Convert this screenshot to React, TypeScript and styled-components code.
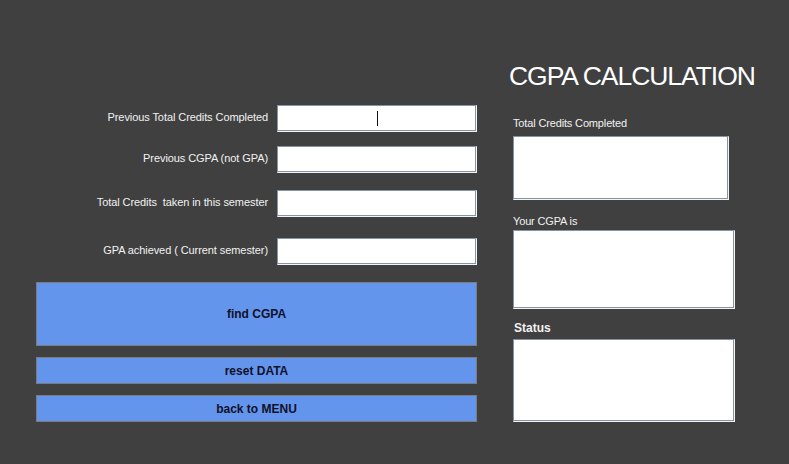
import React from "react";
import styled, { createGlobalStyle } from "styled-components";

const Global = createGlobalStyle`
  html, body { margin: 0; padding: 0; background: #404040; }
  body { font-family: "Liberation Sans", Arial, sans-serif; }
`;

const Page = styled.div`
  width: 789px;
  height: 464px;
  background: #404040;
  display: flex;
  align-items: flex-start;
  overflow: hidden;
`;

const LeftColumn = styled.div`
  margin-left: 36px;
  padding-top: 105px;
  width: 441px;
  display: flex;
  flex-direction: column;
`;

const FormRow = styled.div<{ $gap: number }>`
  display: grid;
  grid-template-columns: 241px 200px;
  align-items: center;
  margin-top: ${(p) => p.$gap}px;
`;

const FieldLabel = styled.label`
  text-align: right;
  padding-right: 9px;
  color: #f2f2f2;
  font-size: 11px;
  letter-spacing: -0.08px;
  line-height: 13px;
  padding-bottom: 2px;
`;

const bevel = `
  box-sizing: border-box;
  background: #ffffff;
  border: 1px solid;
  border-color: #8593a2 #f4f4f4 #f4f4f4 #8593a2;
  box-shadow: inset -1px -1px 0 #8593a2;
`;

const Field = styled.div`
  ${bevel}
  height: 27px;
  display: flex;
  align-items: center;
  justify-content: center;
`;

const Caret = styled.span`
  width: 1px;
  height: 15px;
  background: #111;
  margin-left: 1px;
`;

const ActionButton = styled.button<{ $gap: number; $height: number }>`
  box-sizing: border-box;
  margin-top: ${(p) => p.$gap}px;
  height: ${(p) => p.$height}px;
  width: 441px;
  background: #6495ed;
  border: 1px solid #7c7c7c;
  color: #10102a;
  font-family: "Liberation Sans", Arial, sans-serif;
  font-weight: bold;
  font-size: 12px;
  padding: 0;
  cursor: pointer;
`;

const RightColumn = styled.div`
  margin-left: 32px;
  padding-top: 63px;
  display: flex;
  flex-direction: column;
`;

const Title = styled.h1`
  margin: 0 0 27px 0;
  font-family: "Liberation Sans", Arial, sans-serif;
  font-weight: normal;
  font-size: 26.5px;
  letter-spacing: -1.05px;
  line-height: 27px;
  color: #ffffff;
  white-space: nowrap;
`;

const SectionLabel = styled.div<{ $bold?: boolean; $gapBelow: number }>`
  margin-left: ${(p) => (p.$bold ? 5 : 4)}px;
  margin-bottom: ${(p) => p.$gapBelow}px;
  color: #f2f2f2;
  font-size: ${(p) => (p.$bold ? 12 : 11)}px;
  font-weight: ${(p) => (p.$bold ? "bold" : "normal")};
  letter-spacing: ${(p) => (p.$bold ? 0 : -0.15)}px;
  line-height: ${(p) => (p.$bold ? 14 : 13)}px;
`;

const OutputBox = styled.div<{ $w: number; $h: number; $gapBelow: number }>`
  ${bevel}
  margin-left: 4px;
  width: ${(p) => p.$w}px;
  height: ${(p) => p.$h}px;
  margin-bottom: ${(p) => p.$gapBelow}px;
`;

const rows = [
  { label: "Previous Total Credits Completed", gap: 0, caret: true },
  { label: "Previous CGPA (not GPA)", gap: 14 },
  { label: "Total Credits\u00a0 taken in this semester", gap: 17 },
  { label: "GPA achieved ( Current semester)", gap: 21 },
];

export default function App() {
  return (
    <>
      <Global />
      <Page>
        <LeftColumn>
          {rows.map((r) => (
            <FormRow key={r.label} $gap={r.gap}>
              <FieldLabel>{r.label}</FieldLabel>
              <Field>{r.caret ? <Caret /> : null}</Field>
            </FormRow>
          ))}
          <ActionButton $gap={17} $height={64}>find CGPA</ActionButton>
          <ActionButton $gap={11} $height={27}>reset DATA</ActionButton>
          <ActionButton $gap={11} $height={27}>back to MENU</ActionButton>
        </LeftColumn>
        <RightColumn>
          <Title>CGPA CALCULATION</Title>
          <SectionLabel $gapBelow={6}>Total Credits Completed</SectionLabel>
          <OutputBox $w={216} $h={64} $gapBelow={15} />
          <SectionLabel $gapBelow={2}>Your CGPA is</SectionLabel>
          <OutputBox $w={222} $h={79} $gapBelow={12} />
          <SectionLabel $bold $gapBelow={4}>Status</SectionLabel>
          <OutputBox $w={222} $h={83} $gapBelow={0} />
        </RightColumn>
      </Page>
    </>
  );
}
